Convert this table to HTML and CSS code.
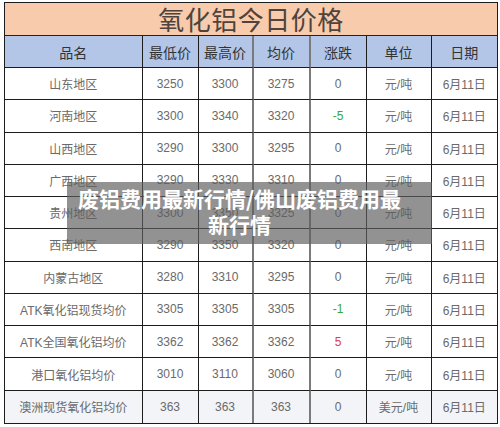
FILE: index.html
```html
<!DOCTYPE html>
<html lang="zh-CN">
<head>
<meta charset="utf-8">
<title>氧化铝今日价格</title>
<link rel="stylesheet" href="styles.css">
</head>
<body>
<div class="page">
  <div class="sheet">
    <div class="title">氧化铝今日价格</div>
    <div class="grid">
      <div class="cell head">品名</div><div class="cell head">最低价</div><div class="cell head g">最高价</div><div class="cell head g">均价</div><div class="cell head">涨跌</div><div class="cell head">单位</div><div class="cell head g last">日期</div>

      <div class="cell">山东地区</div><div class="cell">3250</div><div class="cell g">3300</div><div class="cell g">3275</div><div class="cell">0</div><div class="cell">元/吨</div><div class="cell g last">6月11日</div>
      <div class="cell">河南地区</div><div class="cell">3300</div><div class="cell g">3340</div><div class="cell g">3320</div><div class="cell down">-5</div><div class="cell">元/吨</div><div class="cell g last">6月11日</div>
      <div class="cell">山西地区</div><div class="cell">3290</div><div class="cell g">3300</div><div class="cell g">3295</div><div class="cell">0</div><div class="cell">元/吨</div><div class="cell g last">6月11日</div>
      <div class="cell">广西地区</div><div class="cell">3290</div><div class="cell g">3330</div><div class="cell g">3310</div><div class="cell">0</div><div class="cell">元/吨</div><div class="cell g last">6月11日</div>
      <div class="cell">贵州地区</div><div class="cell">3300</div><div class="cell g">3350</div><div class="cell g">3325</div><div class="cell">0</div><div class="cell">元/吨</div><div class="cell g last">6月11日</div>
      <div class="cell">西南地区</div><div class="cell">3290</div><div class="cell g">3350</div><div class="cell g">3320</div><div class="cell">0</div><div class="cell">元/吨</div><div class="cell g last">6月11日</div>
      <div class="cell">内蒙古地区</div><div class="cell">3280</div><div class="cell g">3310</div><div class="cell g">3295</div><div class="cell">0</div><div class="cell">元/吨</div><div class="cell g last">6月11日</div>
      <div class="cell">ATK氧化铝现货均价</div><div class="cell">3305</div><div class="cell g">3305</div><div class="cell g">3305</div><div class="cell down">-1</div><div class="cell">元/吨</div><div class="cell g last">6月11日</div>
      <div class="cell">ATK全国氧化铝均价</div><div class="cell">3362</div><div class="cell g">3362</div><div class="cell g">3362</div><div class="cell up">5</div><div class="cell">元/吨</div><div class="cell g last">6月11日</div>
      <div class="cell">港口氧化铝均价</div><div class="cell">3010</div><div class="cell g">3110</div><div class="cell g">3060</div><div class="cell">0</div><div class="cell">元/吨</div><div class="cell g last">6月11日</div>
      <div class="cell alt bottom">澳洲现货氧化铝均价</div><div class="cell alt bottom">363</div><div class="cell alt bottom g">363</div><div class="cell alt bottom g">363</div><div class="cell alt bottom">0</div><div class="cell alt bottom">美元/吨</div><div class="cell alt bottom g last">6月11日</div>
    </div>
  </div>
  <div class="overlay">废铝费用最新行情/佛山废铝费用最新行情</div>
</div>
</body>
</html>
```

FILE: styles.css
```css
html, body {
  margin: 0;
  padding: 0;
  background: #ffffff;
}

body {
  font-family: "Liberation Sans", "Noto Sans CJK SC", sans-serif;
  width: 500px;
  height: 427px;
  overflow: hidden;
}

.page {
  position: relative;
  width: 500px;
  height: 427px;
  padding: 2px 0 0 4px;
  box-sizing: border-box;
}

.sheet {
  width: 494px;
  border: 1.5px solid #1c1c1c;
  box-sizing: border-box;
}

.title {
  height: 32px;
  line-height: 31px;
  background: #f8cbad;
  border-bottom: 1px solid #222;
  text-align: center;
  font-family: "Noto Sans CJK SC", sans-serif;
  font-size: 26px;
  color: #4f433c;
  letter-spacing: 0.5px;
}

.grid {
  display: grid;
  grid-template-columns: 137.5px 56px 55px 57px 56px 65px 1fr;
  grid-template-rows: 32px repeat(11, 32.27px);
}

.cell {
  display: flex;
  align-items: center;
  justify-content: center;
  border-right: 1px solid #1c1c1c;
  border-bottom: 1px solid #1c1c1c;
  font-size: 12px;
  color: #6a6a6a;
  white-space: nowrap;
  overflow: hidden;
}

.cell.g {
  border-right: 2px solid #7a7a7a;
}

.cell.last {
  border-right: none;
}

.cell.bottom {
  border-bottom: none;
}

.head {
  background: #b4c6e7;
  font-family: "Noto Sans CJK SC", sans-serif;
  font-size: 14px;
  color: #333333;
}

.alt {
  background: #f2f4f8;
}

.down {
  color: #3aa830;
}

.up {
  color: #e0403c;
}

.overlay {
  position: absolute;
  left: 67px;
  top: 182px;
  width: 365px;
  height: 62px;
  box-sizing: border-box;
  padding: 3px 24px 0 4px;
  background: rgba(95, 95, 95, 0.68);
  color: #ffffff;
  font-family: "Noto Sans CJK SC", sans-serif;
  font-weight: 700;
  font-size: 21px;
  line-height: 26px;
  text-align: center;
}
```
